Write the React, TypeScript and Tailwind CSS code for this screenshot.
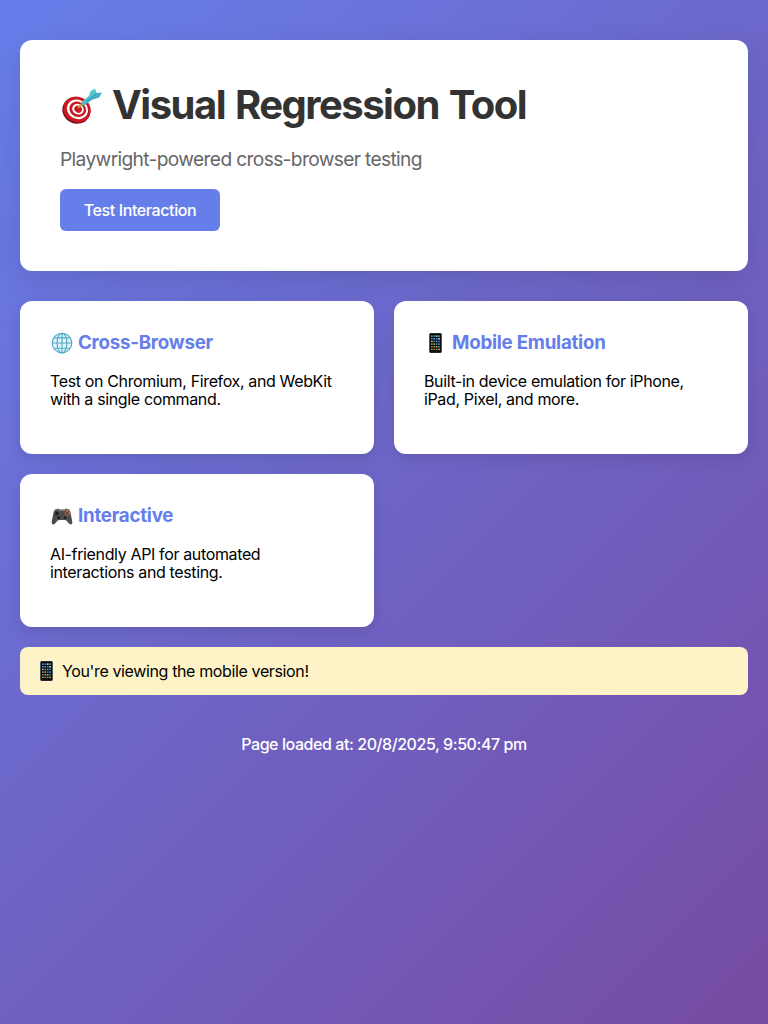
import { ReactNode } from 'react';

function Target() {
  return (
    <svg viewBox="0 0 42 36" className="relative left-px top-[2px] h-9 w-[42px] shrink-0">
      <defs>
        <linearGradient id="dart" x1="0" y1="0" x2="1" y2="1">
          <stop offset="0" stopColor="#66d7df" />
          <stop offset="1" stopColor="#2f9fb3" />
        </linearGradient>
      </defs>
      <g transform="translate(.5 .6) rotate(28 15.5 21)">
        <ellipse cx="15.3" cy="22.2" rx="14.2" ry="12.9" fill="#7d1015" />
        <ellipse cx="15.5" cy="20.8" rx="14" ry="12.6" fill="#c91922" />
        <ellipse cx="15.8" cy="20.6" rx="10.9" ry="9.6" fill="#fff" />
        <ellipse cx="16" cy="20.4" rx="8.6" ry="7.5" fill="#c91922" />
        <ellipse cx="16.2" cy="20.2" rx="6" ry="5.2" fill="#fff" />
        <ellipse cx="16.3" cy="20.1" rx="3.9" ry="3.4" fill="#c91922" />
      </g>
      <path d="M17 19.5 22 15.5" stroke="#d6a536" strokeWidth="2" />
      <path d="m20 14.5 9-7.5 4 3.5-9 6.5-3 .5Z" fill="url(#dart)" />
      <path d="M28 9 29 3.5 34 .5l1.5 4.5 5.5-.5-3 5-6 2Z" fill="url(#dart)" />
      <path d="m25 13.7 11-8" stroke="#24798d" strokeWidth=".5" />
    </svg>
  );
}

function Globe() {
  return (
    <svg viewBox="0 0 22 22" className="relative left-px h-[22px] w-[22px] shrink-0" fill="none" stroke="#51a9c6" strokeWidth="1.15">
      <circle cx="11" cy="11" r="9.8" fill="#e4f5fb" />
      <ellipse cx="11" cy="11" rx="4.9" ry="9.8" />
      <path d="M11 1.2v19.6M1.2 11h19.6M3.1 5.8h15.8M3.1 16.2h15.8" />
    </svg>
  );
}

const APP_COLORS = ['#4ba3c7', '#58b368', '#e7a43f', '#3e86d8', '#d94d4d', '#3e86d8', '#dddddd', '#58b368'];

function Phone() {
  return (
    <svg viewBox="0 0 22 22" className="h-[22px] w-[22px] shrink-0">
      <rect x="5" y="1" width="13" height="20" rx="1.6" fill="#8d9194" />
      <rect x="5.6" y="1.3" width="11.8" height="19.4" rx="1.2" fill="#08090b" />
      {Array.from({ length: 24 }, (_, i) => (
        <rect
          key={i}
          x={7 + (i % 4) * 2.4}
          y={3.4 + Math.floor(i / 4) * 2.65}
          width="1.7"
          height="1.5"
          fill={APP_COLORS[(i * 3 + Math.floor(i / 4)) % 8]}
        />
      ))}
    </svg>
  );
}

function Gamepad() {
  return (
    <svg viewBox="0 0 22 22" className="relative left-px h-[22px] w-[22px] shrink-0">
      <path d="M4 4.4 7 3.6l1.2 1h5.6l1.2-1 3 .8 1.3 2.4 2 10c.3 2.6-1.8 3.7-3.3 1.8L14.8 15H7.2L4 18.6C2.5 20.5.4 19.4.7 16.8l2-10Z" fill="#4b4b49" />
      <path d="m4.3 5.3 2.5-.6 1 .9h6.4l1-.9 2.5.6" stroke="#858580" fill="none" strokeWidth=".8" />
      <path d="M5.8 6.6v4M3.8 8.6h4" stroke="#191a1b" strokeWidth="1.5" />
      <circle cx="7.8" cy="12.7" r="2.2" fill="#222" stroke="#777" strokeWidth=".6" />
      <circle cx="14.2" cy="12.7" r="2.2" fill="#222" stroke="#777" strokeWidth=".6" />
      <circle cx="16.4" cy="6.2" r="1.1" fill="#e3673c" />
      <circle cx="14.4" cy="8.3" r="1" fill="#d45135" />
      <circle cx="18.4" cy="8.3" r="1.1" fill="#ee6841" />
      <circle cx="16.4" cy="10.2" r="1" fill="#af5b45" />
    </svg>
  );
}

function Card({ icon, title, children }: { icon: ReactNode; title: string; children: ReactNode }) {
  return (
    <section className="h-[153px] rounded-xl bg-white p-[30px] shadow-[0_5px_15px_rgba(0,0,0,0.1)]">
      <h3 className="flex h-[23px] items-center gap-[6px] text-[18.72px] font-bold tracking-[-0.24px] text-[#667eea]">
        {icon}
        <span className="pt-0.5">{title}</span>
      </h3>
      <p className="mt-[18px] text-base leading-[18px] tracking-[-0.36px] text-black">{children}</p>
    </section>
  );
}

export default function App() {
  return (
    <main className="min-h-screen bg-[linear-gradient(135deg,#667eea_0%,#764ba2_100%)] px-5 py-10 font-['Inter',sans-serif]">
      <header className="mb-[30px] h-[231px] rounded-xl bg-white p-10 shadow-[0_10px_30px_rgba(0,0,0,0.1)]">
        <h1 className="mb-5 flex h-12 items-center gap-[10px] text-[40px] font-bold tracking-[-1.52px] text-[#333]">
          <Target />
          <span className="whitespace-nowrap pt-0.5 [word-spacing:2px]">Visual Regression Tool</span>
        </h1>
        <p className="mb-[19px] text-[19.2px] leading-[22px] tracking-[-0.65px] text-[#666]">Playwright-powered cross-browser testing</p>
        <button className="h-[42px] w-40 rounded-md bg-[#667eea] text-base font-[450] tracking-[-0.38px] text-white">Test Interaction</button>
      </header>
      <div className="grid grid-cols-2 gap-5">
        <Card icon={<Globe />} title="Cross-Browser">Test on Chromium, Firefox, and WebKit with a single command.</Card>
        <Card icon={<Phone />} title="Mobile Emulation">Built-in device emulation for iPhone, iPad, Pixel, and more.</Card>
        <Card icon={<Gamepad />} title="Interactive">AI-friendly API for automated<br />interactions and testing.</Card>
      </div>
      <aside className="mt-5 flex h-12 items-center gap-[5px] rounded-lg bg-[#fef3c7] px-[15px] text-base tracking-[-0.37px] text-black">
        <Phone />
        <span>You're viewing the mobile version!</span>
      </aside>
      <footer className="mt-10 text-center text-base font-[450] leading-[18px] tracking-[-0.43px] text-white">Page loaded at: 20/8/2025, 9:50:47 pm</footer>
    </main>
  );
}
